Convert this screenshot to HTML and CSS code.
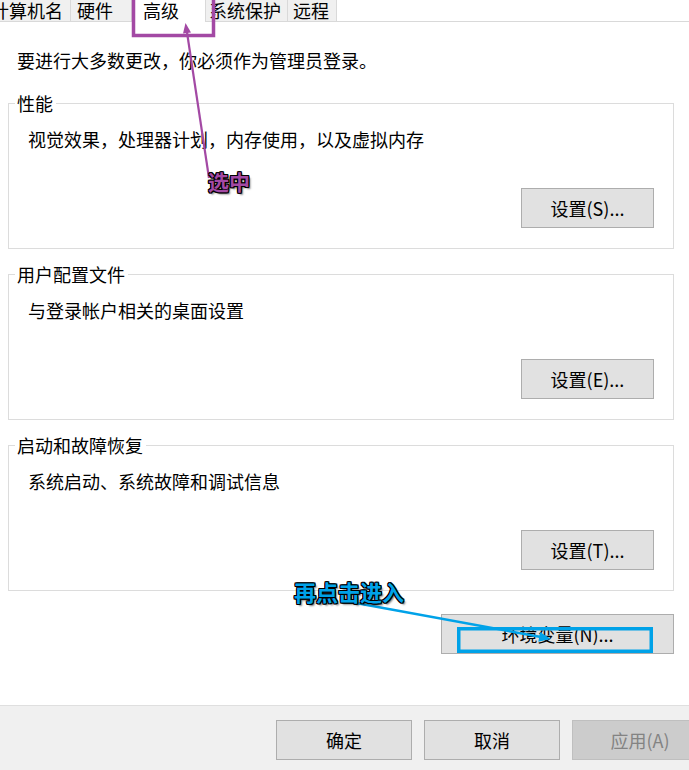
FILE: index.html
```html
<!DOCTYPE html>
<html lang="zh-CN">
<head>
<meta charset="utf-8">
<title>系统属性 - 高级</title>
<link rel="stylesheet" href="styles.css">
</head>
<body>
<div class="tabs">
  <div class="tab tab-first"><span>计算机名</span></div>
  <div class="tab tab-hw">硬件</div>
  <div class="tab tab-adv is-selected">高级</div>
  <div class="tab tab-prot">系统保护</div>
  <div class="tab tab-remote">远程</div>
</div>

<main class="main">
  <p class="notice">要进行大多数更改，你必须作为管理员登录。</p>

  <fieldset class="group">
    <legend class="group-title">性能</legend>
    <p class="group-text">视觉效果，处理器计划，内存使用，以及虚拟内存</p>
    <button class="btn btn-set">设置(S)...</button>
  </fieldset>

  <fieldset class="group">
    <legend class="group-title">用户配置文件</legend>
    <p class="group-text">与登录帐户相关的桌面设置</p>
    <button class="btn btn-set">设置(E)...</button>
  </fieldset>

  <fieldset class="group">
    <legend class="group-title">启动和故障恢复</legend>
    <p class="group-text">系统启动、系统故障和调试信息</p>
    <button class="btn btn-set">设置(T)...</button>
  </fieldset>

  <button class="btn btn-env">环境变量(N)...</button>
</main>

<footer class="footer">
  <button class="btn btn-foot">确定</button>
  <button class="btn btn-foot">取消</button>
  <button class="btn btn-foot btn-disabled" disabled>应用(A)</button>
</footer>

<svg class="marks" width="689" height="770" viewBox="0 0 689 770" aria-hidden="true">
  <rect x="133.5" y="-5" width="80" height="40.5" fill="none" stroke="#a349a4" stroke-width="3.5"/>
  <line x1="209" y1="178" x2="186.8" y2="31" stroke="#a349a4" stroke-width="2.2"/>
  <polygon points="185.5,23 191,32.4 183,33.6" fill="#a349a4"/>
  <rect x="458.75" y="628.75" width="192.5" height="22.5" fill="none" stroke="#00a2e8" stroke-width="3.5"/>
  <line x1="345" y1="601" x2="541" y2="637" stroke="#00a2e8" stroke-width="2.5"/>
  <polygon points="551,639 540.1,631.9 538.3,641.7" fill="#00a2e8"/>
</svg>
<span class="note note-purple">选中</span>
<span class="note note-blue">再点击进入</span>
</body>
</html>
```

FILE: styles.css
```css
* { box-sizing: border-box; }

html, body {
  margin: 0;
  padding: 0;
}

body {
  width: 689px;
  height: 770px;
  overflow: hidden;
  position: relative;
  display: flex;
  flex-direction: column;
  background: #ffffff;
  color: #000000;
  font-family: "Noto Sans CJK SC", "Noto Sans", sans-serif;
  font-size: 18px;
}

/* ---------- tabs ---------- */
.tabs {
  display: flex;
  height: 22px;
  border-bottom: 1px solid #d9d9d9;
  flex: none;
}

.tab {
  flex: none;
  height: 21px;
  line-height: 21px;
  background: #f0f0f0;
  border-right: 1px solid #d9d9d9;
  white-space: nowrap;
}

.tab-first {
  width: 71px;
  display: flex;
  justify-content: flex-end;
  padding-right: 7px;
}

.tab-hw { width: 61px; padding-left: 6px; }

.tab-adv {
  width: 74px;
  padding-left: 11px;
}

.tab.is-selected {
  background: #ffffff;
  height: 22px;
  margin-bottom: -1px;
}

.tab-prot { width: 82px; padding-left: 3px; }
.tab-remote { width: 49px; padding-left: 5px; }

/* ---------- main ---------- */
.main {
  flex: 1;
  padding: 0 15px 0 8px;
  display: flex;
  flex-direction: column;
}

.notice {
  margin: 26px 0 21px 9px;
  line-height: 24px;
}

.group {
  margin: 0 0 15px 0;
  padding: 14px 19px 20px 6px;
  border: 1px solid #dcdcdc;
  min-width: 0;
  display: flex;
  flex-direction: column;
}

.group-title {
  padding: 0 3px 0 2px;
  line-height: 20px;
  font-size: 18px;
}

.group-text {
  margin: 0 0 0 13px;
  line-height: 24px;
}

.btn {
  font-family: inherit;
  font-size: 18px;
  color: #000000;
  background: #e1e1e1;
  border: 1px solid #adadad;
  border-radius: 0;
  height: 40px;
  line-height: 38px;
  padding: 0;
  margin: 0;
  white-space: nowrap;
}

.btn-set {
  width: 133px;
  margin-top: 37px;
  align-self: flex-end;
}

.btn-env {
  width: 233px;
  margin-top: 8px;
  align-self: flex-end;
}

/* ---------- footer ---------- */
.footer {
  flex: none;
  height: 65px;
  border-top: 1px solid #dfdfdf;
  background: #f0f0f0;
  padding-top: 14px;
  display: flex;
  justify-content: flex-end;
  align-items: flex-start;
  gap: 12px;
  overflow: hidden;
}

.btn-foot { width: 136px; flex: none; }

.btn-disabled {
  background: #cccccc;
  border-color: #bfbfbf;
  color: #838383;
  margin-right: -19px;
}

/* ---------- annotations ---------- */
.marks {
  position: absolute;
  left: 0;
  top: 0;
  pointer-events: none;
}

.note {
  position: absolute;
  font-family: "Noto Sans CJK SC", sans-serif;
  font-weight: 700;
  line-height: 1;
  white-space: nowrap;
  text-shadow:
    1px 0 0 #000, -1px 0 0 #000, 0 1px 0 #000, 0 -1px 0 #000,
    1px 1px 0 #000, -1px -1px 0 #000, 1px -1px 0 #000, -1px 1px 0 #000,
    2px 2px 2px rgba(0, 0, 0, 0.55);
}

.note-purple {
  left: 208px;
  top: 171px;
  font-size: 21px;
  color: #a349a4;
}

.note-blue {
  left: 294px;
  top: 580px;
  font-size: 22px;
  color: #00a2e8;
}
```
